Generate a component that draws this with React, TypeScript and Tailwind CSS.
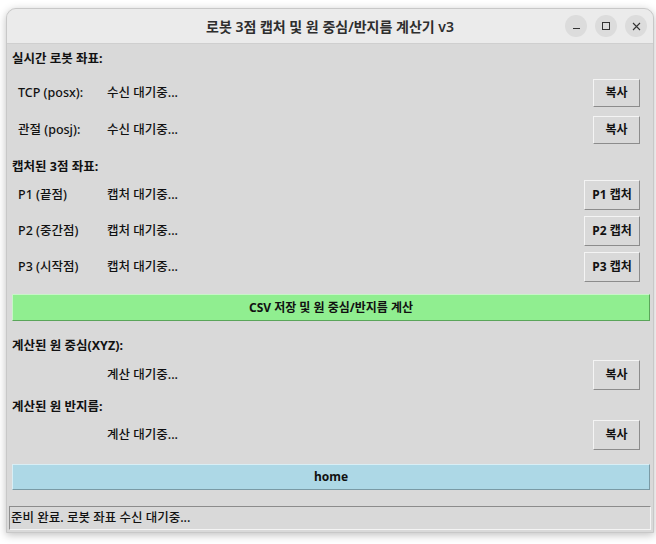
const font = { fontFamily: '"Noto Sans", "Noto Sans CJK KR", sans-serif' };

function TkButton({ label, className = "" }: { label: string; className?: string }) {
  return (
    <div
      className={`flex items-center justify-center border border-t-[#f4f4f4] border-l-[#f4f4f4] border-r-[#8c8c8c] border-b-[#8c8c8c] bg-[#d9d9d9] text-[12px] font-bold text-[#111] ${className}`}
    >
      {label}
    </div>
  );
}

function Row({ label, value, button, btnW, h, mt }: { label: string; value: string; button: string; btnW: string; h: string; mt: string }) {
  return (
    <div className={`flex items-center pl-[6px] pr-[10px] ${mt}`}>
      <span className="w-[89px] text-[12.5px] font-medium text-[#111]">{label}</span>
      <span className="flex-1 text-[12.5px] font-medium text-[#111]">{value}</span>
      <TkButton label={button} className={`${btnW} ${h}`} />
    </div>
  );
}

function Heading({ text, mt }: { text: string; mt: string }) {
  return <div className={`h-4 text-[12.5px] font-bold leading-4 text-[#111] ${mt}`}>{text}</div>;
}

export default function App() {
  return (
    <div className="h-[544px] w-[656px] overflow-hidden bg-white pl-[6px] pt-[8px]" style={font}>
      <div className="h-[525px] w-[648px] overflow-hidden rounded-t-[10px] border border-[#c8c8c8] bg-[#d9d9d9] shadow-[0_2px_8px_rgba(0,0,0,0.25)]">
        {/* title bar */}
        <div className="relative flex h-[35px] items-center justify-center border-b border-[#cfcfcf] bg-[#ebebeb]">
          <span className="text-[14px] font-semibold text-[#2e2e2e]">로봇 3점 캡처 및 원 중심/반지름 계산기 v3</span>
          <div className="absolute right-[6px] top-[6px] flex gap-[8px]">
            <div className="flex h-[22px] w-[22px] items-center justify-center rounded-full bg-[#dcdcdc]">
              <div className="mt-[5px] h-[1px] w-[7px] bg-[#333]" />
            </div>
            <div className="flex h-[22px] w-[22px] items-center justify-center rounded-full bg-[#dcdcdc]">
              <div className="h-[8px] w-[8px] border border-[#333]" />
            </div>
            <div className="flex h-[22px] w-[22px] items-center justify-center rounded-full bg-[#dcdcdc]">
              <svg width="9" height="9" viewBox="0 0 9 9">
                <path d="M1 1L8 8M8 1L1 8" stroke="#333" strokeWidth="1.1" />
              </svg>
            </div>
          </div>
        </div>

        <div className="pl-[5px] pr-[3px]">
          <Heading text="실시간 로봇 좌표:" mt="mt-[7px]" />
          <Row label="TCP (posx):" value="수신 대기중..." button="복사" btnW="w-[47px]" h="h-[28px]" mt="mt-[12px]" />
          <Row label="관절 (posj):" value="수신 대기중..." button="복사" btnW="w-[47px]" h="h-[28px]" mt="mt-[9px]" />

          <Heading text="캡처된 3점 좌표:" mt="mt-[15px]" />
          <Row label="P1 (끝점)" value="캡처 대기중..." button="P1 캡처" btnW="w-[56px]" h="h-[30px]" mt="mt-[5px]" />
          <Row label="P2 (중간점)" value="캡처 대기중..." button="P2 캡처" btnW="w-[56px]" h="h-[30px]" mt="mt-[6px]" />
          <Row label="P3 (시작점)" value="캡처 대기중..." button="P3 캡처" btnW="w-[56px]" h="h-[30px]" mt="mt-[6px]" />

          <div className="mt-[12px] flex h-[27px] items-center justify-center border border-t-[#c8f5c8] border-l-[#c8f5c8] border-r-[#5aa55a] border-b-[#5aa55a] bg-[#90ee90] text-[12px] font-bold text-[#111]">
            CSV 저장 및 원 중심/반지름 계산
          </div>

          <Heading text="계산된 원 중심(XYZ):" mt="mt-[17px]" />
          <Row label="" value="계산 대기중..." button="복사" btnW="w-[47px]" h="h-[30px]" mt="mt-[6px]" />
          <Heading text="계산된 원 반지름:" mt="mt-[9px]" />
          <Row label="" value="계산 대기중..." button="복사" btnW="w-[47px]" h="h-[30px]" mt="mt-[5px]" />

          <div className="mt-[14px] flex h-[26px] items-center justify-center border border-t-[#d8eef5] border-l-[#d8eef5] border-r-[#7a9aa5] border-b-[#7a9aa5] bg-[#add8e6] text-[12px] font-bold text-[#111]">
            home
          </div>
        </div>

        <div className="mx-[2px] mt-[16px] flex h-[24px] items-center border border-t-[#8c8c8c] border-l-[#8c8c8c] border-r-[#f4f4f4] border-b-[#f4f4f4] px-[1px] text-[12.5px] font-medium text-[#111]">
          준비 완료. 로봇 좌표 수신 대기중...
        </div>
      </div>
    </div>
  );
}
